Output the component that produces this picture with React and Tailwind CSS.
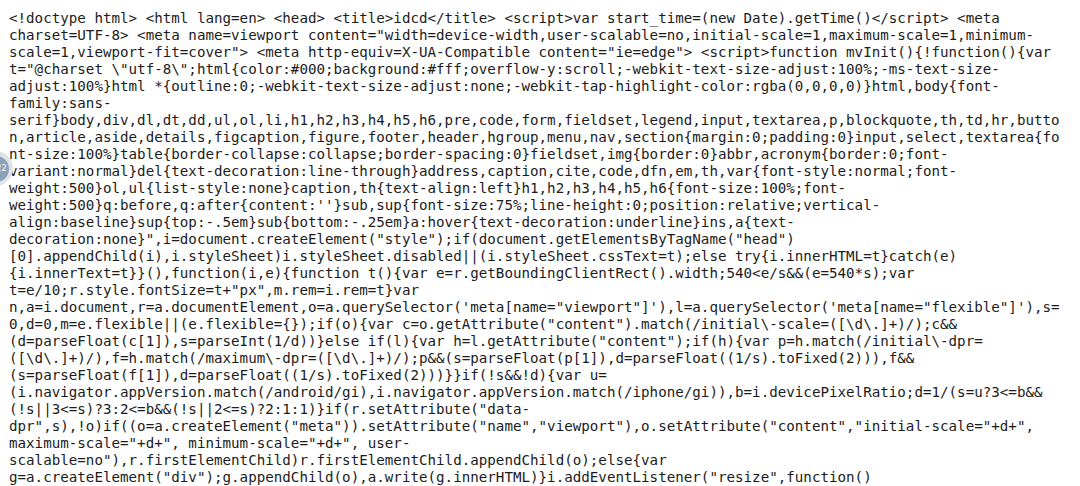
const lines = [
  String.raw`<!doctype html> <html lang=en> <head> <title>idcd</title> <script>var start_time=(new Date).getTime()</script> <meta`,
  String.raw`charset=UTF-8> <meta name=viewport content="width=device-width,user-scalable=no,initial-scale=1,maximum-scale=1,minimum-`,
  String.raw`scale=1,viewport-fit=cover"> <meta http-equiv=X-UA-Compatible content="ie=edge"> <script>function mvInit(){!function(){var`,
  String.raw`t="@charset \"utf-8\";html{color:#000;background:#fff;overflow-y:scroll;-webkit-text-size-adjust:100%;-ms-text-size-`,
  String.raw`adjust:100%}html *{outline:0;-webkit-text-size-adjust:none;-webkit-tap-highlight-color:rgba(0,0,0,0)}html,body{font-`,
  String.raw`family:sans-`,
  String.raw`serif}body,div,dl,dt,dd,ul,ol,li,h1,h2,h3,h4,h5,h6,pre,code,form,fieldset,legend,input,textarea,p,blockquote,th,td,hr,butto`,
  String.raw`n,article,aside,details,figcaption,figure,footer,header,hgroup,menu,nav,section{margin:0;padding:0}input,select,textarea{fo`,
  String.raw`nt-size:100%}table{border-collapse:collapse;border-spacing:0}fieldset,img{border:0}abbr,acronym{border:0;font-`,
  String.raw`variant:normal}del{text-decoration:line-through}address,caption,cite,code,dfn,em,th,var{font-style:normal;font-`,
  String.raw`weight:500}ol,ul{list-style:none}caption,th{text-align:left}h1,h2,h3,h4,h5,h6{font-size:100%;font-`,
  String.raw`weight:500}q:before,q:after{content:''}sub,sup{font-size:75%;line-height:0;position:relative;vertical-`,
  String.raw`align:baseline}sup{top:-.5em}sub{bottom:-.25em}a:hover{text-decoration:underline}ins,a{text-`,
  String.raw`decoration:none}",i=document.createElement("style");if(document.getElementsByTagName("head")`,
  String.raw`[0].appendChild(i),i.styleSheet)i.styleSheet.disabled||(i.styleSheet.cssText=t);else try{i.innerHTML=t}catch(e)`,
  String.raw`{i.innerText=t}}(),function(i,e){function t(){var e=r.getBoundingClientRect().width;540<e/s&&(e=540*s);var`,
  String.raw`t=e/10;r.style.fontSize=t+"px",m.rem=i.rem=t}var`,
  String.raw`n,a=i.document,r=a.documentElement,o=a.querySelector('meta[name="viewport"]'),l=a.querySelector('meta[name="flexible"]'),s=`,
  String.raw`0,d=0,m=e.flexible||(e.flexible={});if(o){var c=o.getAttribute("content").match(/initial\-scale=([\d\.]+)/);c&&`,
  String.raw`(d=parseFloat(c[1]),s=parseInt(1/d))}else if(l){var h=l.getAttribute("content");if(h){var p=h.match(/initial\-dpr=`,
  String.raw`([\d\.]+)/),f=h.match(/maximum\-dpr=([\d\.]+)/);p&&(s=parseFloat(p[1]),d=parseFloat((1/s).toFixed(2))),f&&`,
  String.raw`(s=parseFloat(f[1]),d=parseFloat((1/s).toFixed(2)))}}if(!s&&!d){var u=`,
  String.raw`(i.navigator.appVersion.match(/android/gi),i.navigator.appVersion.match(/iphone/gi)),b=i.devicePixelRatio;d=1/(s=u?3<=b&&`,
  String.raw`(!s||3<=s)?3:2<=b&&(!s||2<=s)?2:1:1)}if(r.setAttribute("data-`,
  String.raw`dpr",s),!o)if((o=a.createElement("meta")).setAttribute("name","viewport"),o.setAttribute("content","initial-scale="+d+",`,
  String.raw`maximum-scale="+d+", minimum-scale="+d+", user-`,
  String.raw`scalable=no"),r.firstElementChild)r.firstElementChild.appendChild(o);else{var`,
  String.raw`g=a.createElement("div");g.appendChild(o),a.write(g.innerHTML)}i.addEventListener("resize",function()`,
];

export default function App() {
  return (
    <div className="relative w-[1080px] h-[486px] overflow-hidden bg-white">
      <div className="pt-[10px] pl-[9px] font-['DejaVu_Sans_Mono',monospace] text-[14.2px] leading-[17px] text-[#1c1c1c]">
        {lines.map((l, i) => (
          <div key={i} className="whitespace-pre">{l}</div>
        ))}
      </div>

      {/* floating bubble, half off the left edge */}
      <div className="absolute left-[-22px] top-[151px] w-[35px] h-[35px] rounded-full bg-[#dfe4ea] flex items-center justify-center">
        <div className="w-[26px] h-[26px] rounded-full bg-[#8ea2b7] flex items-center justify-end pr-[2px] text-[8px] text-white font-['DejaVu_Sans',sans-serif]">
          22
        </div>
      </div>
    </div>
  );
}
